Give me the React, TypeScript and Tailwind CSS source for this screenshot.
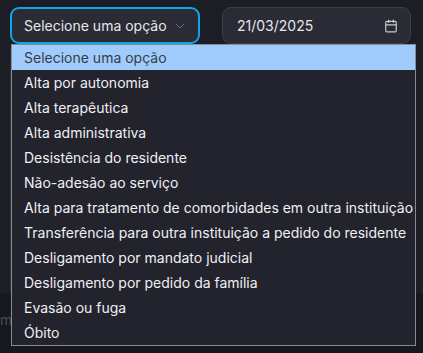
import { ChevronDown, Calendar } from 'lucide-react'

const options = [
  'Selecione uma opção',
  'Alta por autonomia',
  'Alta terapêutica',
  'Alta administrativa',
  'Desistência do residente',
  'Não-adesão ao serviço',
  'Alta para tratamento de comorbidades em outra instituição',
  'Transferência para outra instituição a pedido do residente',
  'Desligamento por mandato judicial',
  'Desligamento por pedido da família',
  'Evasão ou fuga',
  'Óbito',
]

export default function App() {
  return (
    <div className="relative h-[353px] w-[423px] overflow-hidden bg-[#1d1e25] font-['Inter',sans-serif] text-[14px] whitespace-nowrap">
      <div className="flex h-[293px] flex-col bg-[#1d1e25] px-[10px] pt-[7px]">
        <div className="flex gap-[22px]">
          <div className="flex h-[37px] w-[190px] items-center justify-between rounded-[9px] border-2 border-[#0ea5e9] bg-[#2a2b34] pl-[12px] pr-[10px] text-[#e5e7eb]">
            <span>Selecione uma opção</span>
            <ChevronDown className="h-4 w-4 text-[#6b6e7a]" strokeWidth={1.5} />
          </div>
          <div className="flex h-[37px] w-[189px] items-center justify-between rounded-[9px] border border-[#3c3e4a] bg-[#2a2b34] pl-[14px] pr-[12px] text-[#e5e7eb]">
            <span>21/03/2025</span>
            <Calendar className="h-[14px] w-[14px] text-[#c9cad0]" strokeWidth={2} />
          </div>
        </div>
        <div className="mt-[6px] flex-1 border-l border-[#2c2d36]" />
      </div>
      <div className="h-[60px] bg-[#17181d] pl-0 pt-[16px] text-[#4b4d57]">m</div>

      <ul className="absolute left-[11px] top-[44px] w-[405px] border border-[#8a8b92] bg-[#22232d] text-[#f0f0f2]">
        {options.map((o, i) => (
          <li
            key={o}
            className={
              i === 0
                ? 'flex h-[25px] items-center bg-[#9fcbfd] pl-[12px] text-[#3a3d46]'
                : 'flex h-[25px] items-center pl-[12px]'
            }
          >
            {o}
          </li>
        ))}
      </ul>
    </div>
  )
}
